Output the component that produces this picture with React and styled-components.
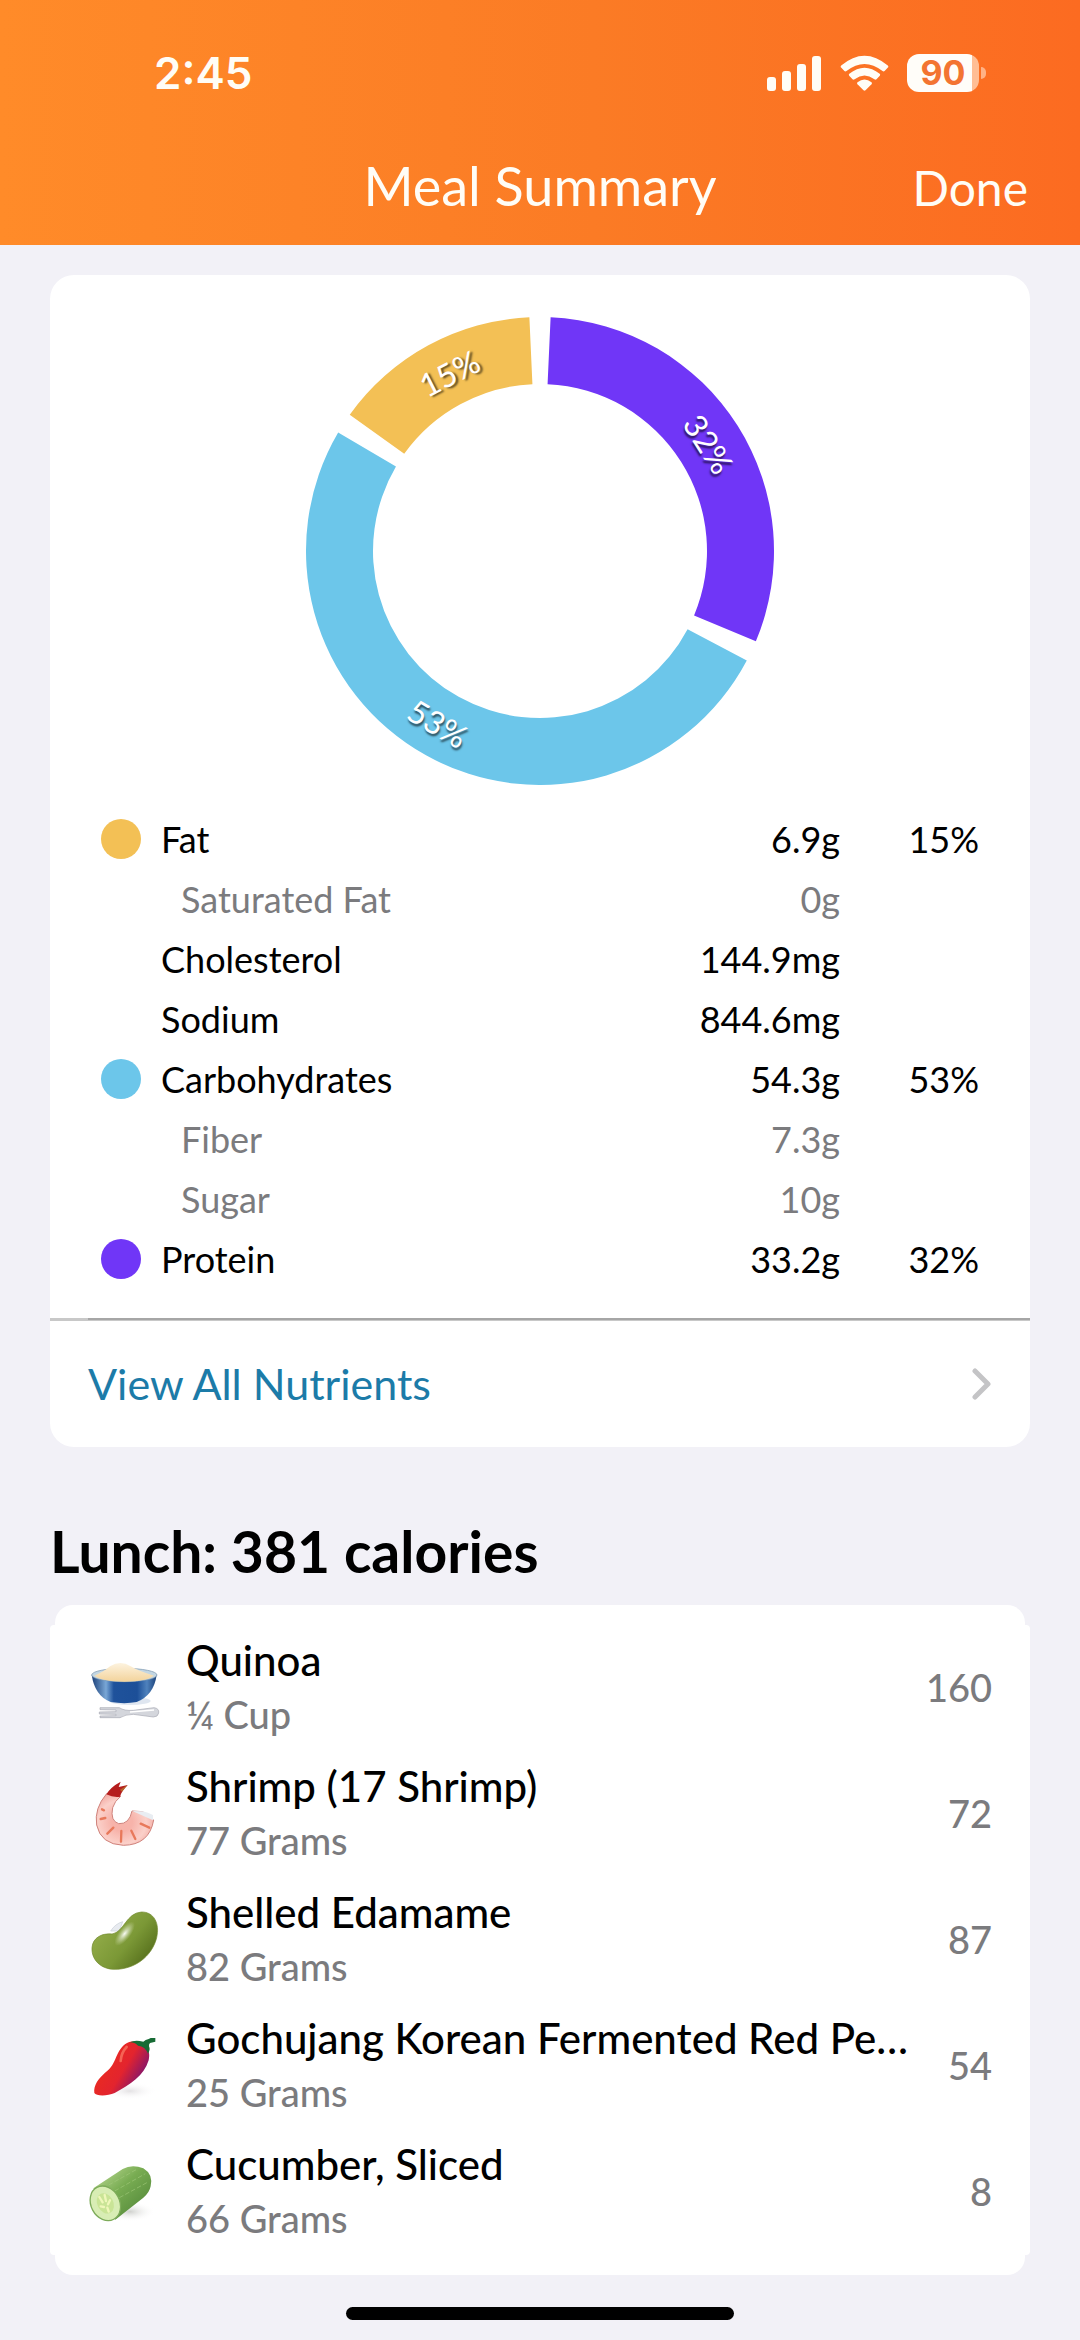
import React from "react";
import styled, { createGlobalStyle } from "styled-components";

const colors = {
  fat: "#f3c055",
  carbs: "#6cc6ea",
  protein: "#7036f7",
  muted: "#7b7b7e",
};

const GlobalStyle = createGlobalStyle`
  *, *::before, *::after { box-sizing: border-box; }
  body {
    margin: 0;
    background: #f2f1f7;
    color: #000;
    font-family: Lato, "Noto Sans", sans-serif;
  }
`;

const Screen = styled.div`
  display: flex;
  flex-direction: column;
  min-height: 100vh;
`;

const Header = styled.header`
  color: #fffdf6;
  background: linear-gradient(90deg, #ff8b29 0%, #fb7b25 55%, #fc6b21 100%);
`;

const StatusBar = styled.div`
  display: flex;
  align-items: center;
  justify-content: space-between;
  height: 146px;
  padding: 0 94px 0 154px;
`;

const Clock = styled.time`
  font: 600 44px/48px Inter, sans-serif;
`;

const StatusIcons = styled.div`
  display: flex;
  align-items: center;
  gap: 18px;
`;

const Battery = styled.div`
  display: flex;
  align-items: center;
  gap: 2px;
`;

const BatteryBody = styled.div`
  width: 72px;
  height: 38px;
  border-radius: 12px;
  background: linear-gradient(90deg, #fffdf9 65px, #ffbd94 65px);
  color: #f37431;
  font: 700 34px/38px Inter, sans-serif;
  text-align: center;
`;

const BatteryTip = styled.div`
  width: 5px;
  height: 12px;
  border-radius: 0 6px 6px 0;
  background: #ffb285;
`;

const NavBar = styled.div`
  display: grid;
  grid-template-columns: 1fr auto 1fr;
  align-items: baseline;
  height: 99px;
  padding: 8px 52px 0;
`;

const Title = styled.h1`
  grid-column: 2;
  margin: 0;
  font-size: 54px;
  line-height: 64px;
  font-weight: 400;
`;

const DoneButton = styled.button`
  justify-self: end;
  padding: 0;
  border: 0;
  background: none;
  color: inherit;
  font-family: inherit;
  font-size: 48px;
  line-height: 64px;
`;

const Main = styled.main`
  padding: 30px 50px 0;
`;

const SummaryCard = styled.section`
  padding-top: 42px;
  border-radius: 24px;
  background: #fff;
`;

const Chart = styled.svg`
  display: block;
  width: 468px;
  height: 468px;
  margin: 0 auto 24px;
`;

const SliceLabel = styled.text`
  fill: #fff;
  font-size: 32px;
  text-anchor: middle;
  dominant-baseline: central;
  text-shadow: 2px 2px 2px rgba(0, 0, 0, 0.6);
`;

const NutrientTable = styled.table`
  width: calc(100% - 102px);
  margin: 0 51px;
  border-collapse: collapse;
  table-layout: fixed;
  font-size: 36px;
  line-height: 60px;
`;

const NutrientRow = styled.tr`
  height: 60px;
  color: ${(p) => (p.$sub ? colors.muted : "#000")};
`;

const DotCell = styled.td`
  width: 60px;
  padding: 0;
`;

const Dot = styled.span`
  display: block;
  width: 40px;
  height: 40px;
  border-radius: 50%;
  background: ${(p) => p.$color};
`;

const NameCell = styled.th`
  padding: 0 0 0 ${(p) => (p.$sub ? 20 : 0)}px;
  font-weight: 400;
  text-align: left;
`;

const ValueCell = styled.td`
  width: ${(p) => p.$width}px;
  padding: 0;
  text-align: right;
`;

const Divider = styled.div`
  display: flex;
  height: 3px;
  margin-top: 29px;
  background: #c8c8c8;

  &::before {
    content: "";
    flex: 1;
    height: 2px;
    margin-left: 38px;
    background: #a6a6a6;
  }
`;

const NutrientsLink = styled.a`
  display: flex;
  align-items: center;
  justify-content: space-between;
  height: 126px;
  padding: 0 38px;
  color: #1c7ba8;
  font-size: 43px;
  line-height: 52px;
  text-decoration: none;
`;

const MealTitle = styled.h2`
  margin: 72px 0 22px;
  font-size: 57px;
  line-height: 64px;
  font-weight: 700;
`;

const FoodCard = styled.section`
  &::before,
  &::after {
    content: "";
    display: block;
    height: 20px;
    margin: 0 5px;
    background: #fff;
  }
  &::before { border-radius: 18px 18px 0 0; }
  &::after { border-radius: 0 0 18px 18px; }
`;

const FoodList = styled.ul`
  margin: 0;
  padding: 0;
  list-style: none;
  border-radius: 4px;
  background: #fff;
`;

const FoodItem = styled.li`
  display: flex;
  align-items: center;
  gap: 26px;
  height: 126px;
  padding: 0 38px 2px;
`;

const FoodIcon = styled.svg`
  flex: none;
  width: 72px;
  height: 72px;
`;

const FoodText = styled.div`
  flex: 1;
  min-width: 0;
  line-height: 54px;
`;

const FoodName = styled.div`
  font-size: 42px;
  font-weight: 500;
  white-space: nowrap;
`;

const FoodAmount = styled.div`
  color: ${colors.muted};
  font-size: 38px;
  font-weight: 500;
`;

const Calories = styled.div`
  color: ${colors.muted};
  font-size: 38px;
  font-weight: 500;
`;

const HomeIndicator = styled.div`
  width: 388px;
  height: 13px;
  margin: 32px auto 20px;
  border-radius: 7px;
  background: #000;
`;

const slices = [
  { color: colors.protein, from: 0, to: 115.3, label: "32%", mid: 57.6, turn: 57.6 },
  { color: colors.carbs, from: 115.3, to: 303, label: "53%", mid: 210.6, turn: 30.6 },
  { color: colors.fat, from: 303, to: 360, label: "15%", mid: 333, turn: -27 },
];

const polar = (radius, degrees) => {
  const a = (degrees * Math.PI) / 180;
  return [radius * Math.sin(a), -radius * Math.cos(a)];
};

const slicePath = (from, to) => {
  const start = from + 2.6;
  const end = to - 2.6;
  const large = end - start > 180 ? 1 : 0;
  return `M${polar(234, start)} A234,234 0 ${large} 1 ${polar(234, end)} L${polar(167, end)} A167,167 0 ${large} 0 ${polar(167, start)}Z`;
};

function MacroChart() {
  return (
    <Chart viewBox="-234 -234 468 468" role="img" aria-label="Macros">
      {slices.map((s) => {
        const [x, y] = polar(200, s.mid);
        return (
          <g key={s.label}>
            <path d={slicePath(s.from, s.to)} fill={s.color} />
            <SliceLabel transform={`translate(${x} ${y}) rotate(${s.turn})`}>{s.label}</SliceLabel>
          </g>
        );
      })}
    </Chart>
  );
}

const nutrients = [
  { name: "Fat", amount: "6.9g", percent: "15%", color: colors.fat },
  { name: "Saturated Fat", amount: "0g", sub: true },
  { name: "Cholesterol", amount: "144.9mg" },
  { name: "Sodium", amount: "844.6mg" },
  { name: "Carbohydrates", amount: "54.3g", percent: "53%", color: colors.carbs },
  { name: "Fiber", amount: "7.3g", sub: true },
  { name: "Sugar", amount: "10g", sub: true },
  { name: "Protein", amount: "33.2g", percent: "32%", color: colors.protein },
];

const QuinoaArt = () => (
  <>
    <defs>
      <linearGradient id="bowl">
        <stop offset="0" stopColor="#1b3f78" />
        <stop offset=".22" stopColor="#79a7d6" />
        <stop offset=".34" stopColor="#1f529b" />
        <stop offset=".7" stopColor="#1c4f98" />
        <stop offset=".85" stopColor="#4f82bd" />
        <stop offset="1" stopColor="#1a4179" />
      </linearGradient>
      <linearGradient id="grain" x2="0" y2="1">
        <stop offset="0" stopColor="#fdf3df" />
        <stop offset="1" stopColor="#f3d39b" />
      </linearGradient>
    </defs>
    <ellipse cx="150" cy="186" rx="62" ry="12" fill="#dfe6f0" />
    <path d="M35 107Q44 170 92 189Q134 196 170 189Q222 168 230 107Z" fill="url(#bowl)" />
    <ellipse cx="133" cy="108" rx="98" ry="20" fill="#c3d6e2" stroke="#7994ac" strokeWidth="2" />
    <path d="M43 110Q72 98 90 82Q122 62 152 82Q180 98 222 110Q200 127 133 128Q66 127 43 110Z" fill="url(#grain)" />
    <path d="M60 206L118 206Q132 216 160 214L222 206Q238 208 236 222Q234 234 220 234L160 226Q136 226 120 236L60 236L60 231L108 230V226L58 225V219L108 218V213L60 212Z" fill="#d4d6dc" stroke="#a6a8b2" strokeWidth="2" />
    <path d="M150 219L222 213" stroke="#fff" strokeWidth="4" />
  </>
);

const ShrimpArt = () => (
  <>
    <defs>
      <radialGradient id="shrimp" cx=".45" cy=".55" r=".6">
        <stop offset=".3" stopColor="#f7b3aa" />
        <stop offset=".7" stopColor="#fbd0c9" />
        <stop offset="1" stopColor="#f3aba3" />
      </radialGradient>
    </defs>
    <path d="M80 86Q42 130 50 180Q62 238 130 241Q208 240 221 165L188 140L156 138Q148 178 116 176Q90 168 98 128Q104 108 122 94Z" fill="url(#shrimp)" stroke="#cf837c" strokeWidth="3" />
    <path d="M156 138Q180 148 219 166V150Q204 142 188 139Z" fill="#e9edf2" />
    <g stroke="#e8795b" strokeWidth="7" strokeLinecap="round">
      <path d="M66 133L72 136M62 162L76 159M82 206L100 188M123 230L124 198M166 222L154 197M208 188L182 176" />
    </g>
    <path d="M79 88Q92 66 122 50L116 66L143 60Q126 76 120 95Q100 98 79 88Z" fill="#b51d1d" />
    <path d="M120 74L143 60L126 80Z" fill="#b4642b" />
  </>
);

const EdamameArt = () => (
  <>
    <defs>
      <linearGradient id="bean" x1=".2" y1=".3" x2=".9" y2=".8">
        <stop offset="0" stopColor="#8ea845" />
        <stop offset=".5" stopColor="#7b9836" />
        <stop offset="1" stopColor="#566f1c" />
      </linearGradient>
      <radialGradient id="shine">
        <stop offset="0" stopColor="#fff" stopOpacity=".95" />
        <stop offset="1" stopColor="#d5e0b5" stopOpacity="0" />
      </radialGradient>
    </defs>
    <path d="M92 120Q106 98 128 92L118 120Z" fill="#e8ebf0" stroke="#c9ced6" strokeWidth="2" />
    <path d="M36 170C38 140 66 126 96 129C132 124 138 66 184 63C222 62 240 98 230 140C216 196 164 236 102 235C62 234 34 206 36 170Z" fill="url(#bean)" stroke="#71892f" strokeWidth="2" />
    <ellipse cx="134" cy="128" rx="44" ry="18" fill="url(#shine)" transform="rotate(-52 134 128)" />
  </>
);

const PepperArt = () => (
  <>
    <defs>
      <linearGradient id="pepper" x1=".2" y1=".4" x2=".8" y2=".75">
        <stop offset="0" stopColor="#e92a22" />
        <stop offset=".5" stopColor="#e3242e" />
        <stop offset="1" stopColor="#8a1668" />
      </linearGradient>
      <radialGradient id="pepperShade">
        <stop offset="0" stopColor="#e4e2e4" />
        <stop offset="1" stopColor="#fff" stopOpacity="0" />
      </radialGradient>
    </defs>
    <ellipse cx="150" cy="222" rx="80" ry="26" fill="url(#pepperShade)" />
    <path d="M148 75C184 68 216 90 206 130C192 176 150 204 104 228C82 238 48 238 43 228C40 206 54 184 84 160C112 136 108 90 148 75Z" fill="url(#pepper)" />
    <path d="M150 76Q164 68 190 74Q196 68 206 66L212 63H226V74L210 78Q206 82 207 88Q212 98 204 110Q196 88 174 86Q164 76 150 76Z" fill="#176b35" />
    <path d="M140 90Q124 106 122 132" fill="none" stroke="#ff8c73" strokeWidth="8" strokeLinecap="round" opacity=".6" />
  </>
);

const CucumberArt = () => (
  <>
    <defs>
      <linearGradient id="cucumber" x1=".2" y1=".2" x2=".8" y2=".8">
        <stop offset="0" stopColor="#a3c97c" />
        <stop offset=".4" stopColor="#78ac52" />
        <stop offset="1" stopColor="#5a8f3e" />
      </linearGradient>
      <radialGradient id="cucumberShade">
        <stop offset="0" stopColor="#cfd1cd" />
        <stop offset="1" stopColor="#fff" stopOpacity="0" />
      </radialGradient>
    </defs>
    <ellipse cx="150" cy="206" rx="76" ry="30" fill="url(#cucumberShade)" />
    <path d="M40 136L128 78Q156 62 190 76Q220 94 212 130Q208 150 190 164L106 230Z" fill="url(#cucumber)" />
    <path d="M86 126L172 78M104 144L196 92M118 164L206 116" stroke="#a3cc7c" strokeWidth="3" strokeDasharray="14 6" opacity=".6" />
    <ellipse cx="76" cy="181" rx="43" ry="54" fill="#d8edb4" stroke="#7dab5a" strokeWidth="4" transform="rotate(-28 76 181)" />
    <ellipse cx="76" cy="181" rx="24" ry="32" fill="#c9e496" transform="rotate(-28 76 181)" />
    <path d="M58 162L68 178M74 156L78 174M90 172L84 184M62 190L72 192M82 194L86 206" stroke="#eff7ba" strokeWidth="7" strokeLinecap="round" />
  </>
);

const foods = [
  { name: "Quinoa", amount: "¼ Cup", calories: 160, Art: QuinoaArt },
  { name: "Shrimp (17 Shrimp)", amount: "77 Grams", calories: 72, Art: ShrimpArt },
  { name: "Shelled Edamame", amount: "82 Grams", calories: 87, Art: EdamameArt },
  { name: "Gochujang Korean Fermented Red Pe…", amount: "25 Grams", calories: 54, Art: PepperArt },
  { name: "Cucumber, Sliced", amount: "66 Grams", calories: 8, Art: CucumberArt },
];

const SignalIcon = () => (
  <svg width="55" height="36" viewBox="0 0 55 36" fill="currentColor" aria-hidden="true">
    <rect x="0" y="22" width="9" height="14" rx="3" />
    <rect x="15" y="16" width="9" height="20" rx="3" />
    <rect x="30" y="9" width="9" height="27" rx="3" />
    <rect x="45" y="1" width="9" height="35" rx="3" />
  </svg>
);

const WifiIcon = () => (
  <svg width="49" height="36" viewBox="0 0 49 36" fill="currentColor" aria-hidden="true">
    <path d="M1.2 10.6Q24.500-9 47.800 10.600Q48.800 11.600 47.900 12.600L44.600 16Q43.600 16.900 42.500 16Q24.500 1.800 6.500 16Q5.400 16.900 4.400 16L1.100 12.600Q.2 11.600 1.200 10.600Z" />
    <path d="M9.300 18.800Q24.500 6.600 39.700 18.800Q40.700 19.800 39.800 20.800L36.500 24.200Q35.500 25.100 34.400 24.200Q24.500 17 14.600 24.200Q13.500 25.100 12.500 24.200L9.200 20.800Q8.300 19.800 9.300 18.800Z" />
    <path d="M17.500 27.200Q24.500 21.800 31.500 27.200Q32.400 28.200 31.500 29.200L25.500 35.300Q24.500 36.200 23.500 35.300L17.500 29.200Q16.600 28.200 17.500 27.200Z" />
  </svg>
);

const Chevron = () => (
  <svg width="20" height="32" viewBox="0 0 20 32" fill="none" aria-hidden="true">
    <path d="M3 3L16 16L3 29" stroke="#c4c4c6" strokeWidth="5" strokeLinecap="round" strokeLinejoin="round" />
  </svg>
);

export default function App() {
  return (
    <Screen>
      <GlobalStyle />
      <Header>
        <StatusBar>
          <Clock>2:45</Clock>
          <StatusIcons>
            <SignalIcon />
            <WifiIcon />
            <Battery>
              <BatteryBody>90</BatteryBody>
              <BatteryTip />
            </Battery>
          </StatusIcons>
        </StatusBar>
        <NavBar>
          <Title>Meal Summary</Title>
          <DoneButton type="button">Done</DoneButton>
        </NavBar>
      </Header>
      <Main>
        <SummaryCard>
          <MacroChart />
          <NutrientTable>
            <tbody>
              {nutrients.map((n) => (
                <NutrientRow key={n.name} $sub={n.sub}>
                  <DotCell>{n.color && <Dot $color={n.color} />}</DotCell>
                  <NameCell scope="row" $sub={n.sub}>{n.name}</NameCell>
                  <ValueCell $width={180}>{n.amount}</ValueCell>
                  <ValueCell $width={139}>{n.percent}</ValueCell>
                </NutrientRow>
              ))}
            </tbody>
          </NutrientTable>
          <Divider />
          <NutrientsLink href="#nutrients">
            View All Nutrients
            <Chevron />
          </NutrientsLink>
        </SummaryCard>
        <MealTitle>Lunch: 381 calories</MealTitle>
        <FoodCard>
          <FoodList>
            {foods.map(({ name, amount, calories, Art }) => (
              <FoodItem key={name}>
                <FoodIcon viewBox="24 36 216 216" aria-hidden="true">
                  <Art />
                </FoodIcon>
                <FoodText>
                  <FoodName>{name}</FoodName>
                  <FoodAmount>{amount}</FoodAmount>
                </FoodText>
                <Calories>{calories}</Calories>
              </FoodItem>
            ))}
          </FoodList>
        </FoodCard>
      </Main>
      <HomeIndicator />
    </Screen>
  );
}
